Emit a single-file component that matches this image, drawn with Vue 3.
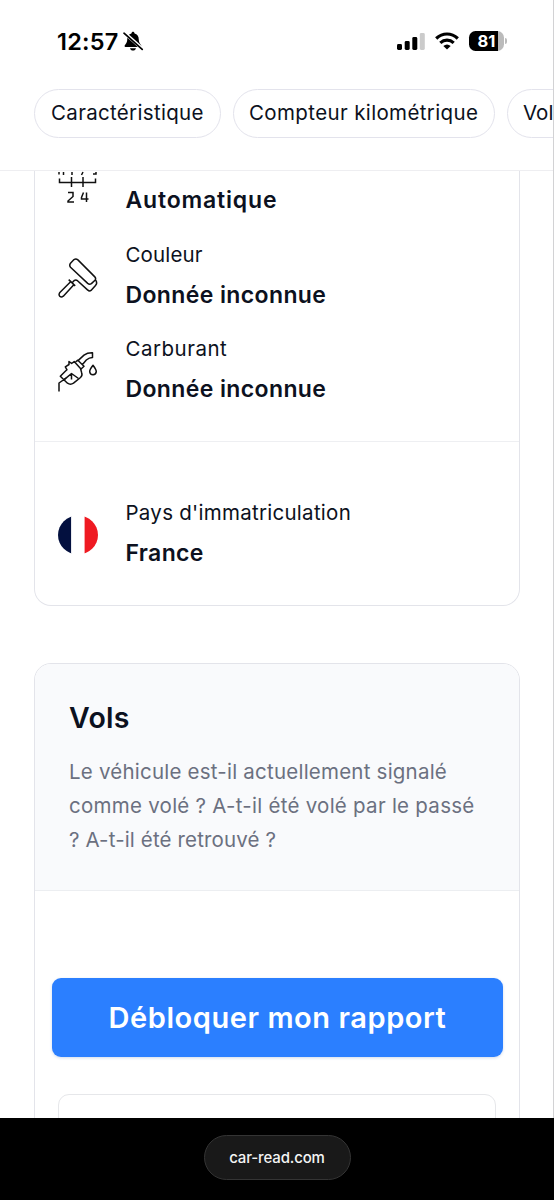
<script setup>
const chips = [
  { label: 'Caractéristique', cls: 'chip-a' },
  { label: 'Compteur kilométrique', cls: 'chip-b' },
  { label: 'Vols', cls: 'chip-c' },
]
</script>

<template>
  <div class="screen">
    <header class="status">
      <div class="clock">
        <span class="time">12:57</span>
        <svg class="bell" width="22" height="22" viewBox="0 0 22 22">
          <path d="M1.6 16.2c0-1.500 2.600-2.700 2.600-6.400 0-3.600 1.600-5.700 4.200-6.200.2-1.200.8-1.800 1.600-1.800s1.400.6 1.600 1.800c2.600.5 4.200 2.600 4.200 6.200 0 3.700 2.600 4.900 2.600 6.400 0 .5-.3.8-.9.8h-15c-.6 0-.9-.3-.9-.8zM7 18.200h6c-.4 1.400-1.500 2.300-3 2.300s-2.600-.9-3-2.300z" fill="#000" />
          <path d="M1.600 3 19 18.400" stroke="#fff" stroke-width="3.400" />
          <path d="M1 3.200 19.200 19.400" stroke="#000" stroke-width="1.700" stroke-linecap="round" />
        </svg>
      </div>
      <div class="indicators">
        <svg width="28" height="20" viewBox="0 0 28 20">
          <rect x="0" y="13" width="5" height="6" rx="1.4" />
          <rect x="7.700" y="10" width="5" height="9" rx="1.4" />
          <rect x="15.300" y="6" width="5" height="13" rx="1.4" />
          <rect x="22.800" y="2" width="5" height="17" rx="1.4" fill="#cbcbcb" />
        </svg>
        <svg width="24" height="18" viewBox="0 0 24 18" fill="none" stroke="#000" stroke-width="3.200">
          <path d="M1.200 6.500Q6 2 12 2t10.800 4.500" />
          <path d="M5.300 10.900Q8.300 8.200 12 8.200t6.700 2.700" />
          <path d="M12 17.600 8.300 13.900Q12 10.900 15.700 13.900z" fill="#000" stroke="none" />
        </svg>
        <div class="battery"><span>81</span><i></i></div>
      </div>
    </header>

    <nav class="chips">
      <a v-for="c in chips" :key="c.label" class="chip" :class="c.cls"><span>{{ c.label }}</span></a>
    </nav>

    <main class="content">
      <section class="card details">
        <div class="row first">
          <svg class="icon" width="40" height="34" viewBox="0 0 40 34" fill="none" stroke="#111" stroke-width="1.500">
            <path d="M1 1v2.500M5.500 1v3M14 1v3M25 1l-1.500 3M35 3h3V1M1.500 7.500v4h36v-4M13.500 6v10M25 6v10" />
            <path d="M10 21.500h5v4l-5 4.500v1h6M28.500 31V21.500M30.500 28H23.500v-1.500l2-5" />
          </svg>
          <strong class="v-auto">Automatique</strong>
        </div>
        <div class="row">
          <svg class="icon low" width="40" height="40" viewBox="0 0 40 40" fill="none" stroke="#111" stroke-width="1.500" stroke-linejoin="round">
            <path d="M12.500 5.200 16 1.600Q18 .4 19.900 1.900L36.600 18.600Q38.400 20.400 37 22.200L33.400 25.600Q31.500 26.800 29.700 25.400L12.500 9.200Q11 7.200 12.500 5.200z" />
            <path d="M37.300 21.800Q39.900 25 37.500 27.400L33 32.400Q31.500 33.600 29.500 31.900L19.500 22.700Q17.800 21.500 16 22.700L14.600 24.200M10.700 21.600 17.200 27.900M12.600 23.800 1.600 34.800Q.4 37 1.900 38.400 3.500 39.500 5.300 38.200L15.600 27" />
          </svg>
          <div class="pair"><span class="l-coul">Couleur</span><strong class="v-unk">Donnée inconnue</strong></div>
        </div>
        <div class="row">
          <svg class="icon low" width="40" height="40" viewBox="0 0 40 40" fill="none" stroke="#111" stroke-width="1.500" stroke-linejoin="round">
            <path d="M1 39.500V31L8 26.200M7.300 19.300 2.300 24.200 9.500 31.200Q12.400 33.200 15.500 31.200L22.500 25.500Q24.800 23.500 23.600 20.500L22.500 16.500 16.200 9.600 13.600 11.500 11 9.500V12.500L7.300 14.800 9 17.800z" />
            <path d="M6.500 27.300 13.500 21.500 20.500 26.500M13.500 22v5.500M17.500 10 19.800 8.200 26 14.200 22.800 17.200M20.300 8.400 26 3.100Q29.600.6 34.500.8V5.500Q31.200 5.500 28.300 8L24.500 12.500" />
            <path d="M35 13.300Q31.600 17.600 31.700 19.700 32 22.700 35 22.800 38 22.600 38.300 19.700 38.200 17.500 35 13.300z" />
          </svg>
          <div class="pair"><span class="l-carb">Carburant</span><strong class="v-unk">Donnée inconnue</strong></div>
        </div>
        <div class="row country">
          <svg class="icon flag" width="40" height="40" viewBox="0 0 40 40">
            <defs><clipPath id="disc"><ellipse cx="20" cy="20" rx="20" ry="19.500" /></clipPath></defs>
            <g clip-path="url(#disc)">
              <rect width="13.300" height="40" fill="#03103f" />
              <rect x="13.300" width="13.300" height="40" fill="#fff" />
              <rect x="26.600" width="13.400" height="40" fill="#ef1a22" />
            </g>
          </svg>
          <div class="pair"><span class="l-pays">Pays d'immatriculation</span><strong class="v-fr">France</strong></div>
        </div>
      </section>

      <section class="card thefts">
        <div class="intro">
          <h2>Vols</h2>
          <p><span class="p1">Le véhicule est-il actuellement signalé</span><br><span class="p2">comme volé ? A-t-il été volé par le passé</span><br><span class="p3">? A-t-il été retrouvé ?</span></p>
        </div>
        <button class="cta"><span>Débloquer mon rapport</span></button>
        <div class="panel"></div>
      </section>
    </main>

    <footer class="browser"><div class="url">car-read.com</div></footer>
  </div>
</template>

<style>
body { margin: 0; background: #fff; }
</style>

<style scoped>
* { box-sizing: border-box; }
.screen { position: relative; width: 554px; height: 1200px; display: flex; flex-direction: column; overflow: hidden; background: #fff; color: #0c1120; font-family: Inter, "Liberation Sans", sans-serif; white-space: nowrap; }
.screen::after { content: ""; position: absolute; right: 0; top: 0; width: 1px; height: 1118px; background: #d2d2d4; }
.status { height: 82px; flex: none; display: flex; justify-content: space-between; align-items: center; padding: 0 47px 0 57px; }
.clock { display: flex; align-items: center; gap: 4px; }
.time { font-size: 23.500px; font-weight: 600; color: #000; letter-spacing: .25px; }
.indicators { display: flex; align-items: center; gap: 10px; }
.battery { position: relative; display: flex; align-items: center; justify-content: center; width: 35px; height: 20px; border-radius: 6.500px; background: linear-gradient(90deg, #000 29px, #bbb 29px); color: #fff; font-size: 16.500px; font-weight: 700; margin-right: 3px; }
.battery i { position: absolute; right: -3px; top: 7px; width: 2px; height: 6px; border-radius: 0 2px 2px 0; background: #bbb; }
.chips { height: 89px; flex: none; display: flex; gap: 12px; padding: 7px 0 0 34px; border-bottom: 1px solid #eeeef1; overflow: hidden; }
.chip { flex: none; height: 49px; display: flex; align-items: center; padding: 0 0 2px 16px; border: 1.500px solid #e3e3ec; border-radius: 25px; font-size: 20.500px; }
.chip-a { width: 187px; letter-spacing: .32px; }
.chip-b { width: 262px; padding-left: 15px; letter-spacing: .37px; }
.chip-c { width: 100px; padding-left: 15px; }
.content { flex: 1; min-height: 0; overflow: hidden; padding: 0 34px; }
.card { border: 1px solid #e3e4ea; border-radius: 17px; overflow: hidden; }
.details { height: 435px; border-top: 0; border-radius: 0 0 17px 17px; }
.row { display: flex; align-items: center; gap: 27.500px; height: 94.300px; padding-left: 23px; }
.row.first { height: 51px; align-items: flex-start; }
.first strong { margin-top: 9px; }
.row.first + .row { margin-top: 6px; }
.icon { flex: none; }
.low { margin-top: 6px; }
.flag { margin-top: 4px; }
.pair { display: flex; flex-direction: column; }
.pair span, .row strong { line-height: 41.500px; }
.pair span { font-size: 20.500px; }
.row strong { font-size: 23px; font-weight: 600; }
.row .v-auto { letter-spacing: .82px; }
.row .v-unk { letter-spacing: .38px; }
.row .v-fr { letter-spacing: .35px; line-height: 40.500px; }
.l-coul { letter-spacing: .15px; }
.l-carb { letter-spacing: .5px; }
.l-pays { letter-spacing: .27px; }
.country { height: 164px; margin-top: 24.400px; padding-top: 19px; border-top: 1px solid #eeeff2; }
.thefts { margin-top: 57px; height: 500px; border-radius: 17px; }
.intro { height: 227px; padding: 33px 34px 0; background: #f9fafc; border-bottom: 1px solid #eceef1; }
h2 { margin: 0; font-size: 28.500px; line-height: 42px; font-weight: 600; letter-spacing: .3px; }
p { margin: 16px 0 0; font-size: 20.500px; line-height: 33.800px; color: #6b7080; }
.p1 { letter-spacing: .22px; }
.p2 { letter-spacing: .26px; }
.p3 { letter-spacing: .14px; }
.cta { display: flex; align-items: center; justify-content: center; width: 451px; height: 79px; margin: 86.500px 0 0 17px; padding: 0; border: 0; border-radius: 9px; background: #2b7fff; color: #fff; font: 600 29px Inter, sans-serif; letter-spacing: .56px; box-shadow: 0 1px 3px rgba(30, 80, 160, .2); }
.panel { width: 438px; height: 100px; margin: 37px 0 0 23px; border: 1.500px solid #e6e7ea; border-radius: 11px; }
.browser { height: 82px; flex: none; display: flex; justify-content: center; padding-top: 17px; background: #000; }
.url { width: 147px; height: 45px; display: flex; align-items: center; justify-content: center; border: 1px solid #343434; border-radius: 23px; background: #191919; color: #f4f4f4; font-size: 15px; font-weight: 500; letter-spacing: -.15px; }
</style>
